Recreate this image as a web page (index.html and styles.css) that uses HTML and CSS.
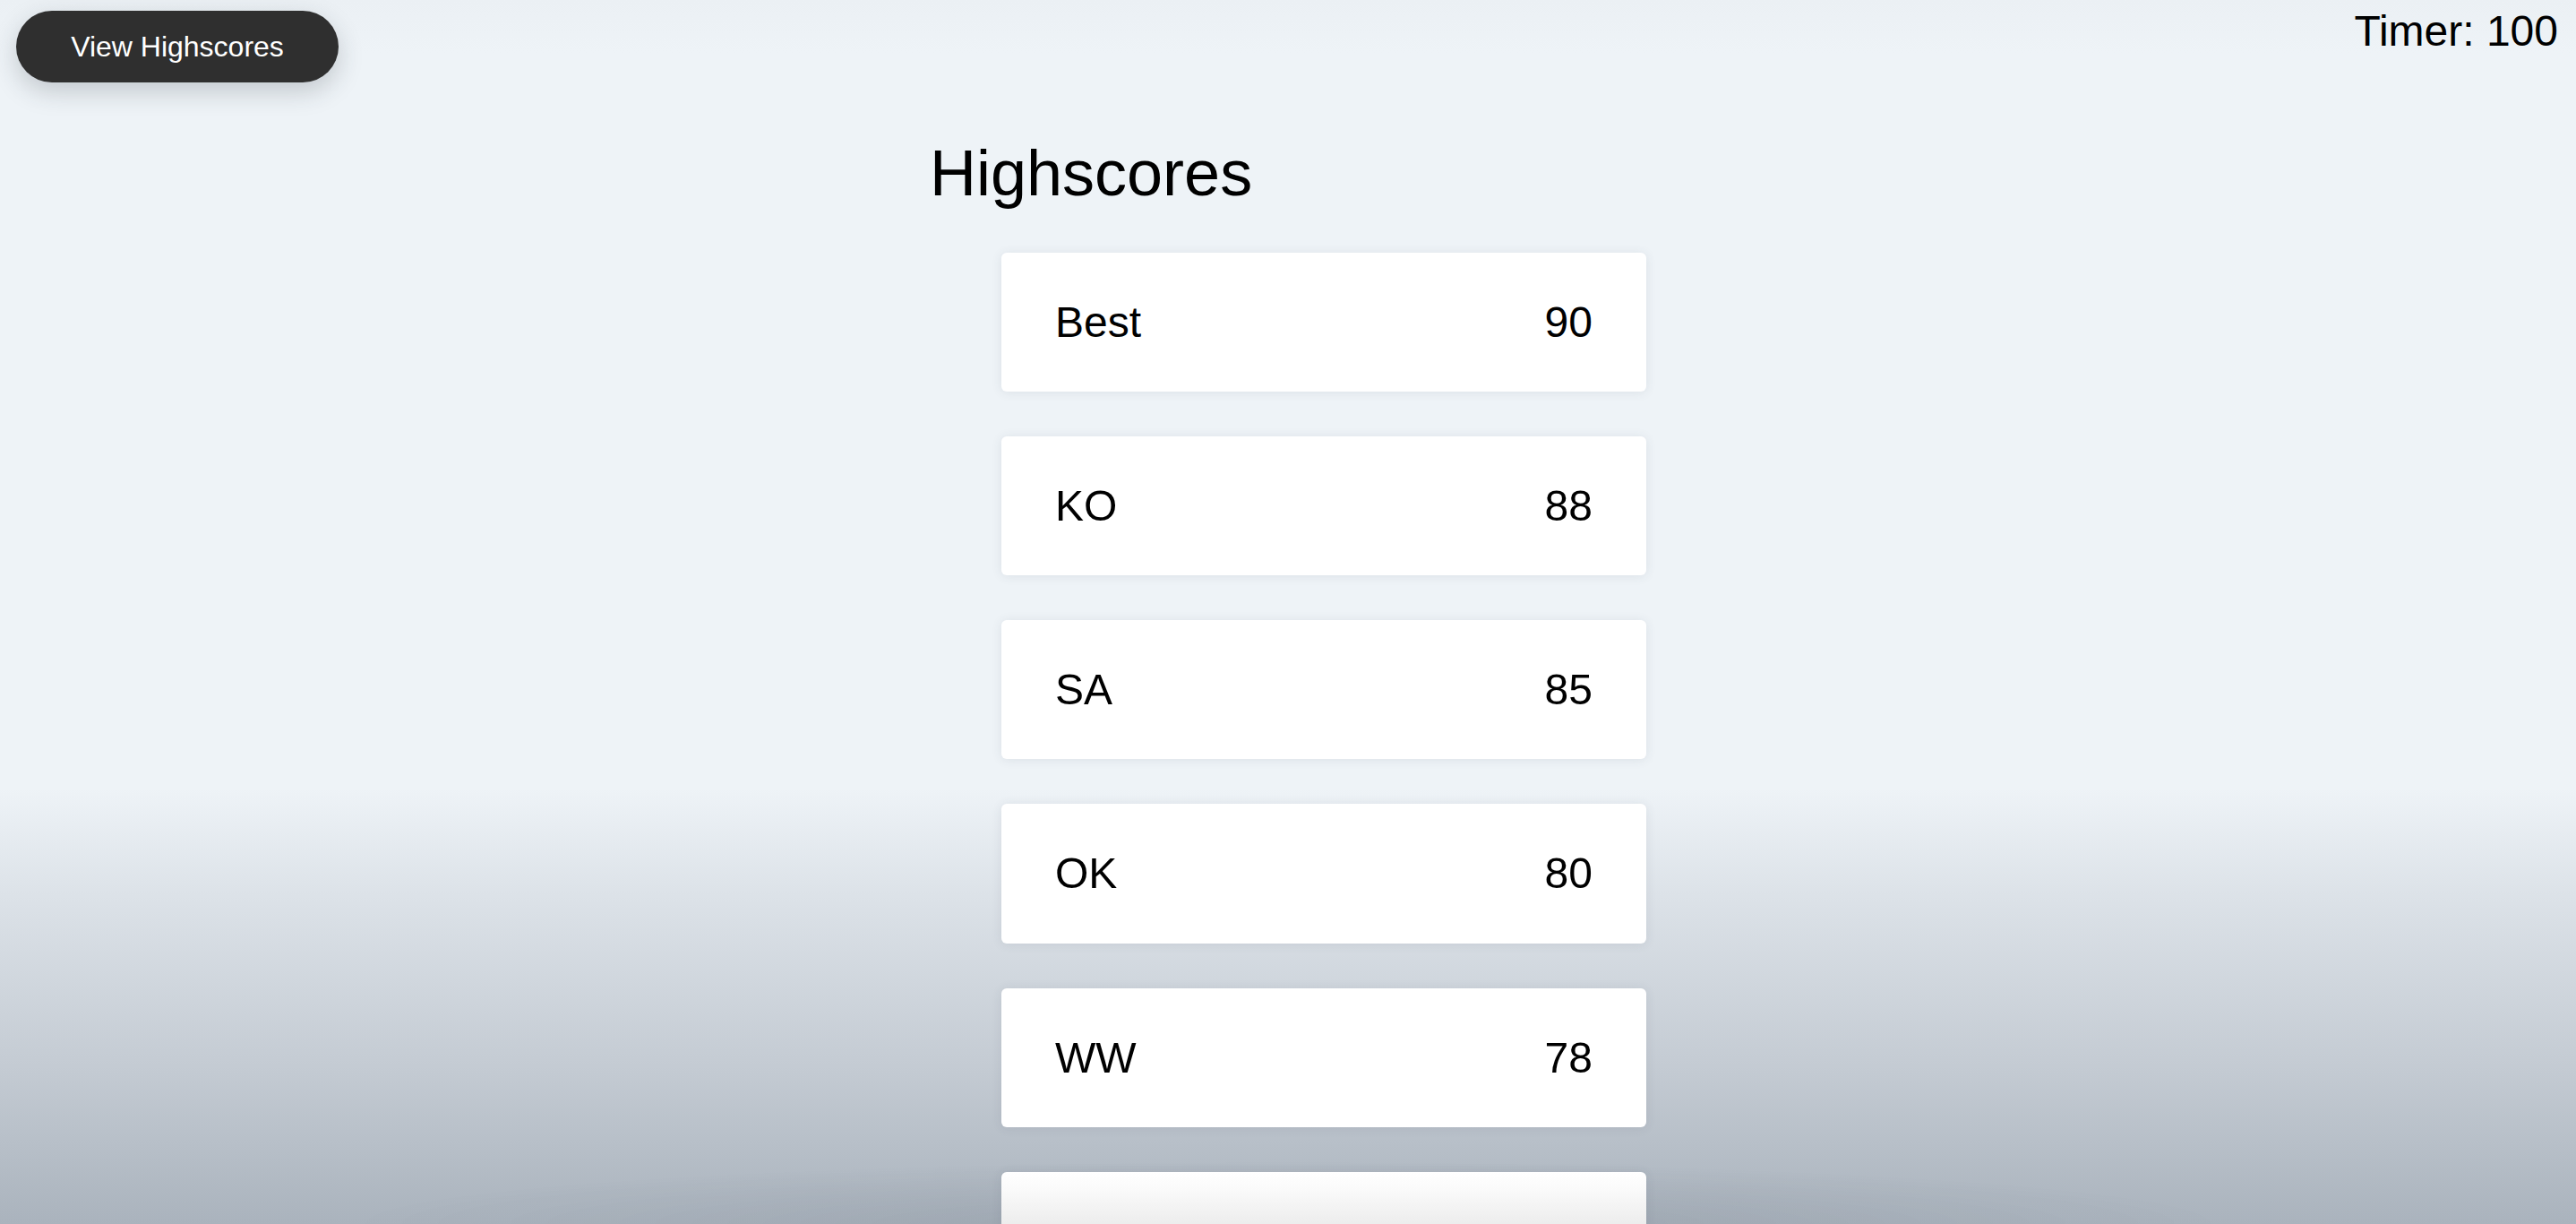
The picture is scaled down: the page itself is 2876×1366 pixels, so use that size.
FILE: index.html
```html
<!DOCTYPE html>
<html lang="en">
<head>
<meta charset="utf-8">
<title>Highscores</title>
<link rel="stylesheet" href="styles.css">
</head>
<body>
<header class="topbar">
  <button class="hs-button" type="button">View Highscores</button>
  <div class="timer">Timer: 100</div>
</header>
<main class="board">
  <h1 class="title">Highscores</h1>
  <ul class="scores">
    <li class="score"><span class="name">Best</span><span class="points">90</span></li>
    <li class="score"><span class="name">KO</span><span class="points">88</span></li>
    <li class="score"><span class="name">SA</span><span class="points">85</span></li>
    <li class="score"><span class="name">OK</span><span class="points">80</span></li>
    <li class="score"><span class="name">WW</span><span class="points">78</span></li>
    <li class="score score-fade"><span class="name">GG</span><span class="points">75</span></li>
  </ul>
</main>
<div class="dock-shadow"></div>
</body>
</html>
```
FILE: styles.css
```css
html, body {
  margin: 0;
  padding: 0;
}
html {
  background: #eef3f7;
}
body {
  font-family: "Liberation Sans", Arial, Helvetica, sans-serif;
  color: #000;
  min-height: 100vh;
  background:
    linear-gradient(to bottom, #ebf0f4 0px, #eef3f7 60px, #eef3f7 880px, #dce2e8 1000px, #c4cbd3 1190px, #aab3bd 1366px);
  background-repeat: no-repeat;
  background-size: 100% 1366px;
}

.topbar {
  display: flex;
  justify-content: space-between;
  align-items: flex-start;
  padding: 0 18px;
  height: 92px;
}

.hs-button {
  margin-top: 12px;
  width: 360px;
  height: 80px;
  border: none;
  border-radius: 40px;
  background: #2f2f2f;
  color: #fff;
  font-family: "Liberation Sans", Arial, Helvetica, sans-serif;
  font-size: 32px;
  box-shadow: 0 10px 28px rgba(40, 50, 60, 0.22);
  cursor: pointer;
}

.timer {
  margin-top: 7px;
  margin-right: 2px;
  font-size: 48px;
  line-height: 1.15;
}

.board {
  width: 800px;
  margin: 0 auto;
}

.title {
  margin: 60px 0 47px;
  font-size: 72px;
  font-weight: normal;
  line-height: 1.15;
}

.scores {
  list-style: none;
  margin: 0;
  padding: 0 0 0 80px;
  display: flex;
  flex-direction: column;
  gap: 50px;
}

.score {
  position: relative;
  z-index: 1;
  display: flex;
  justify-content: space-between;
  align-items: center;
  padding: 50px 60px;
  background: #fff;
  border-radius: 6px;
  font-size: 48px;
  line-height: 1.15;
  box-shadow: 0 1px 12px rgba(60, 70, 85, 0.10);
}

.score-fade {
  background: linear-gradient(to bottom, #ffffff 0px, #fafafa 20px, #ededed 57px, #e4e4e4 155px);
}

.dock-shadow {
  position: fixed;
  left: 0;
  right: 0;
  bottom: 0;
  height: 100px;
  pointer-events: none;
  background: radial-gradient(ellipse 1050px 70px at 50% 100%, rgba(30, 40, 55, 0.10), rgba(30, 40, 55, 0) 100%);
}
```
